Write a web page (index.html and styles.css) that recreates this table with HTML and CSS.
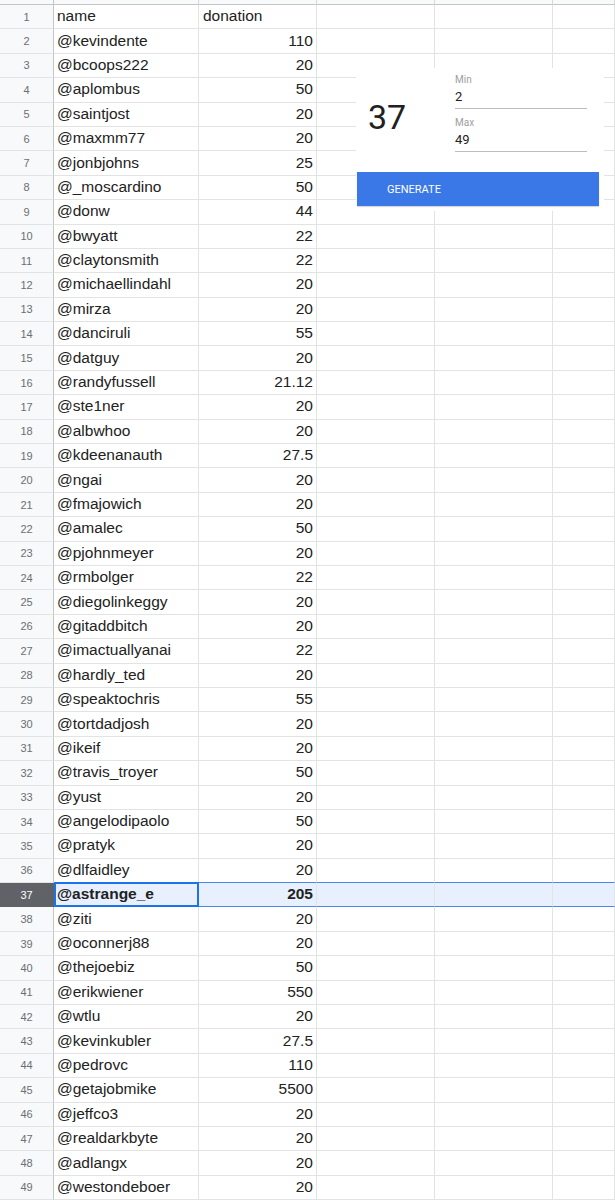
FILE: index.html
```html
<!DOCTYPE html>
<html>
<head>
<meta charset="utf-8">
<link rel="stylesheet" href="styles.css">
</head>
<body>
<div class="sheet">
  <div class="row colhead"><div class="c h"></div><div class="c a"></div><div class="c b"></div><div class="c x"></div><div class="c x"></div><div class="c e"></div></div>
  <div class="row"><div class="c h">1</div><div class="c a">name</div><div class="c b l">donation</div><div class="c x"></div><div class="c x"></div><div class="c e"></div></div>
  <div class="row"><div class="c h">2</div><div class="c a">@kevindente</div><div class="c b">110</div><div class="c x"></div><div class="c x"></div><div class="c e"></div></div>
  <div class="row"><div class="c h">3</div><div class="c a">@bcoops222</div><div class="c b">20</div><div class="c x"></div><div class="c x"></div><div class="c e"></div></div>
  <div class="row"><div class="c h">4</div><div class="c a">@aplombus</div><div class="c b">50</div><div class="c x"></div><div class="c x"></div><div class="c e"></div></div>
  <div class="row"><div class="c h">5</div><div class="c a">@saintjost</div><div class="c b">20</div><div class="c x"></div><div class="c x"></div><div class="c e"></div></div>
  <div class="row"><div class="c h">6</div><div class="c a">@maxmm77</div><div class="c b">20</div><div class="c x"></div><div class="c x"></div><div class="c e"></div></div>
  <div class="row"><div class="c h">7</div><div class="c a">@jonbjohns</div><div class="c b">25</div><div class="c x"></div><div class="c x"></div><div class="c e"></div></div>
  <div class="row"><div class="c h">8</div><div class="c a">@_moscardino</div><div class="c b">50</div><div class="c x"></div><div class="c x"></div><div class="c e"></div></div>
  <div class="row"><div class="c h">9</div><div class="c a">@donw</div><div class="c b">44</div><div class="c x"></div><div class="c x"></div><div class="c e"></div></div>
  <div class="row"><div class="c h">10</div><div class="c a">@bwyatt</div><div class="c b">22</div><div class="c x"></div><div class="c x"></div><div class="c e"></div></div>
  <div class="row"><div class="c h">11</div><div class="c a">@claytonsmith</div><div class="c b">22</div><div class="c x"></div><div class="c x"></div><div class="c e"></div></div>
  <div class="row"><div class="c h">12</div><div class="c a">@michaellindahl</div><div class="c b">20</div><div class="c x"></div><div class="c x"></div><div class="c e"></div></div>
  <div class="row"><div class="c h">13</div><div class="c a">@mirza</div><div class="c b">20</div><div class="c x"></div><div class="c x"></div><div class="c e"></div></div>
  <div class="row"><div class="c h">14</div><div class="c a">@danciruli</div><div class="c b">55</div><div class="c x"></div><div class="c x"></div><div class="c e"></div></div>
  <div class="row"><div class="c h">15</div><div class="c a">@datguy</div><div class="c b">20</div><div class="c x"></div><div class="c x"></div><div class="c e"></div></div>
  <div class="row"><div class="c h">16</div><div class="c a">@randyfussell</div><div class="c b">21.12</div><div class="c x"></div><div class="c x"></div><div class="c e"></div></div>
  <div class="row"><div class="c h">17</div><div class="c a">@ste1ner</div><div class="c b">20</div><div class="c x"></div><div class="c x"></div><div class="c e"></div></div>
  <div class="row"><div class="c h">18</div><div class="c a">@albwhoo</div><div class="c b">20</div><div class="c x"></div><div class="c x"></div><div class="c e"></div></div>
  <div class="row"><div class="c h">19</div><div class="c a">@kdeenanauth</div><div class="c b">27.5</div><div class="c x"></div><div class="c x"></div><div class="c e"></div></div>
  <div class="row"><div class="c h">20</div><div class="c a">@ngai</div><div class="c b">20</div><div class="c x"></div><div class="c x"></div><div class="c e"></div></div>
  <div class="row"><div class="c h">21</div><div class="c a">@fmajowich</div><div class="c b">20</div><div class="c x"></div><div class="c x"></div><div class="c e"></div></div>
  <div class="row"><div class="c h">22</div><div class="c a">@amalec</div><div class="c b">50</div><div class="c x"></div><div class="c x"></div><div class="c e"></div></div>
  <div class="row"><div class="c h">23</div><div class="c a">@pjohnmeyer</div><div class="c b">20</div><div class="c x"></div><div class="c x"></div><div class="c e"></div></div>
  <div class="row"><div class="c h">24</div><div class="c a">@rmbolger</div><div class="c b">22</div><div class="c x"></div><div class="c x"></div><div class="c e"></div></div>
  <div class="row"><div class="c h">25</div><div class="c a">@diegolinkeggy</div><div class="c b">20</div><div class="c x"></div><div class="c x"></div><div class="c e"></div></div>
  <div class="row"><div class="c h">26</div><div class="c a">@gitaddbitch</div><div class="c b">20</div><div class="c x"></div><div class="c x"></div><div class="c e"></div></div>
  <div class="row"><div class="c h">27</div><div class="c a">@imactuallyanai</div><div class="c b">22</div><div class="c x"></div><div class="c x"></div><div class="c e"></div></div>
  <div class="row"><div class="c h">28</div><div class="c a">@hardly_ted</div><div class="c b">20</div><div class="c x"></div><div class="c x"></div><div class="c e"></div></div>
  <div class="row"><div class="c h">29</div><div class="c a">@speaktochris</div><div class="c b">55</div><div class="c x"></div><div class="c x"></div><div class="c e"></div></div>
  <div class="row"><div class="c h">30</div><div class="c a">@tortdadjosh</div><div class="c b">20</div><div class="c x"></div><div class="c x"></div><div class="c e"></div></div>
  <div class="row"><div class="c h">31</div><div class="c a">@ikeif</div><div class="c b">20</div><div class="c x"></div><div class="c x"></div><div class="c e"></div></div>
  <div class="row"><div class="c h">32</div><div class="c a">@travis_troyer</div><div class="c b">50</div><div class="c x"></div><div class="c x"></div><div class="c e"></div></div>
  <div class="row"><div class="c h">33</div><div class="c a">@yust</div><div class="c b">20</div><div class="c x"></div><div class="c x"></div><div class="c e"></div></div>
  <div class="row"><div class="c h">34</div><div class="c a">@angelodipaolo</div><div class="c b">50</div><div class="c x"></div><div class="c x"></div><div class="c e"></div></div>
  <div class="row"><div class="c h">35</div><div class="c a">@pratyk</div><div class="c b">20</div><div class="c x"></div><div class="c x"></div><div class="c e"></div></div>
  <div class="row pre-sel"><div class="c h">36</div><div class="c a">@dlfaidley</div><div class="c b">20</div><div class="c x"></div><div class="c x"></div><div class="c e"></div></div>
  <div class="row sel"><div class="c h">37</div><div class="c a active">@astrange_e</div><div class="c b">205</div><div class="c x"></div><div class="c x"></div><div class="c e"></div></div>
  <div class="row"><div class="c h">38</div><div class="c a">@ziti</div><div class="c b">20</div><div class="c x"></div><div class="c x"></div><div class="c e"></div></div>
  <div class="row"><div class="c h">39</div><div class="c a">@oconnerj88</div><div class="c b">20</div><div class="c x"></div><div class="c x"></div><div class="c e"></div></div>
  <div class="row"><div class="c h">40</div><div class="c a">@thejoebiz</div><div class="c b">50</div><div class="c x"></div><div class="c x"></div><div class="c e"></div></div>
  <div class="row"><div class="c h">41</div><div class="c a">@erikwiener</div><div class="c b">550</div><div class="c x"></div><div class="c x"></div><div class="c e"></div></div>
  <div class="row"><div class="c h">42</div><div class="c a">@wtlu</div><div class="c b">20</div><div class="c x"></div><div class="c x"></div><div class="c e"></div></div>
  <div class="row"><div class="c h">43</div><div class="c a">@kevinkubler</div><div class="c b">27.5</div><div class="c x"></div><div class="c x"></div><div class="c e"></div></div>
  <div class="row"><div class="c h">44</div><div class="c a">@pedrovc</div><div class="c b">110</div><div class="c x"></div><div class="c x"></div><div class="c e"></div></div>
  <div class="row"><div class="c h">45</div><div class="c a">@getajobmike</div><div class="c b">5500</div><div class="c x"></div><div class="c x"></div><div class="c e"></div></div>
  <div class="row"><div class="c h">46</div><div class="c a">@jeffco3</div><div class="c b">20</div><div class="c x"></div><div class="c x"></div><div class="c e"></div></div>
  <div class="row"><div class="c h">47</div><div class="c a">@realdarkbyte</div><div class="c b">20</div><div class="c x"></div><div class="c x"></div><div class="c e"></div></div>
  <div class="row"><div class="c h">48</div><div class="c a">@adlangx</div><div class="c b">20</div><div class="c x"></div><div class="c x"></div><div class="c e"></div></div>
  <div class="row"><div class="c h">49</div><div class="c a">@westondeboer</div><div class="c b">20</div><div class="c x"></div><div class="c x"></div><div class="c e"></div></div>

  <div class="card">
    <div class="card-top">
      <div class="big">37</div>
      <div class="fields">
        <div class="field">
          <div class="lbl">Min</div>
          <div class="val">2</div>
        </div>
        <div class="field second">
          <div class="lbl">Max</div>
          <div class="val">49</div>
        </div>
      </div>
    </div>
    <div class="btn">GENERATE</div>
  </div>
</div>
</body>
</html>
```

FILE: styles.css
```css
html, body {
  margin: 0;
  padding: 0;
  background: #fff;
}
body {
  font-family: "Liberation Sans", Arial, sans-serif;
  color: #222;
  overflow: hidden;
}
.sheet {
  position: relative;
  width: 615px;
  height: 1200px;
  overflow: hidden;
}
.row {
  display: flex;
  height: 24.4px;
}
.c {
  box-sizing: border-box;
  height: 100%;
  border-right: 1px solid #e2e3e3;
  border-bottom: 1px solid #e2e3e3;
  display: flex;
  align-items: center;
  font-size: 15.5px;
  white-space: nowrap;
  overflow: hidden;
  padding-bottom: 1px;
}
.c.h {
  width: 54px;
  flex: none;
  background: #f8f9fa;
  border-right-color: #c4c7c5;
  border-bottom-color: #e2e3e3;
  justify-content: center;
  font-size: 11px;
  color: #6b6f73;
  padding-bottom: 0;
}
.c.a {
  width: 145px;
  flex: none;
  padding-left: 3px;
}
.c.b {
  width: 118px;
  flex: none;
  justify-content: flex-end;
  padding-right: 3px;
}
.c.b.l {
  justify-content: flex-start;
  padding-left: 4px;
}
.c.x {
  width: 118px;
  flex: none;
}
.c.e {
  flex: 1;
}
.row.colhead {
  height: 5px;
}
.row.colhead .c {
  background: #f8f9fa;
  border-bottom-color: #c4c7c5;
  border-right-color: #d6d8d9;
  padding: 0;
}
.row.colhead .c.h {
  border-right-color: #c4c7c5;
}
.row.pre-sel .c:not(.h) {
  border-bottom-color: #4a86e8;
}
.row.sel .c {
  background: #e8f0fe;
  border-bottom-color: #4a86e8;
  font-weight: bold;
}
.row.sel .c.h {
  background: #5f6368;
  color: #fff;
  font-weight: normal;
  border-bottom-color: #5f6368;
  border-right-color: #5f6368;
}
.c.active {
  position: relative;
  overflow: visible;
}
.c.active::after {
  content: "";
  position: absolute;
  left: 0;
  top: -1px;
  right: -1px;
  bottom: -1px;
  border: 2px solid #1a73e8;
}

/* floating generator card */
.card {
  position: absolute;
  left: 356px;
  top: 68px;
  width: 248px;
  height: 143px;
  background: #fff;
  box-sizing: border-box;
  font-family: Roboto, "Liberation Sans", Arial, sans-serif;
}
.card-top {
  display: flex;
  height: 104px;
  box-sizing: border-box;
  padding-top: 6px;
}
.big {
  width: 99px;
  box-sizing: border-box;
  padding-left: 12px;
  padding-bottom: 12px;
  font-size: 34px;
  color: #212121;
  display: flex;
  align-items: center;
}
.fields {
  width: 132px;
}
.field {
  border-bottom: 1px solid #bdbdbd;
  padding-bottom: 3px;
}
.field.second {
  margin-top: 8px;
}
.lbl {
  font-size: 10px;
  line-height: 12px;
  color: #9e9e9e;
}
.val {
  margin-top: 3px;
  font-size: 13px;
  line-height: 16px;
  color: #212121;
}
.btn {
  margin-left: 1px;
  width: 242px;
  height: 34px;
  background: #3b78e7;
  color: #fff;
  font-size: 11px;
  display: flex;
  align-items: center;
  padding-left: 30px;
  box-sizing: border-box;
  box-shadow: 0 1px 1px rgba(0,0,0,0.15);
}
```
